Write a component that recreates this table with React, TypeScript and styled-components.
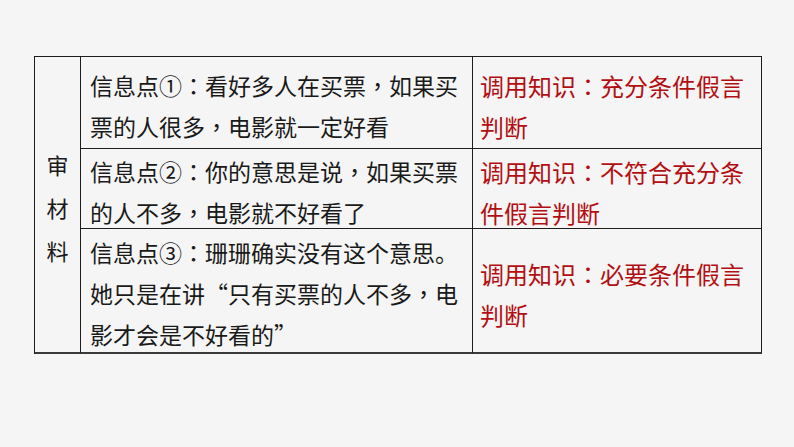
import * as React from 'react';
import styled, { createGlobalStyle } from 'styled-components';

const GlobalStyle = createGlobalStyle`
  html, body {
    margin: 0;
    padding: 0;
    background: #f5f5f5;
  }
  body {
    font-family: 'Noto Sans CJK SC', 'Noto Sans', sans-serif;
  }
`;

const Page = styled.main`
  width: 794px;
  height: 447px;
  box-sizing: border-box;
  padding: 56px 0 0 34px;
  background: #f5f5f5;
`;

const Table = styled.div`
  display: grid;
  grid-template-columns: 46px 392px 289px;
  grid-template-rows: 92px 80px 125px;
  border-top: 1px solid #1c1c1c;
  border-left: 1px solid #1c1c1c;
  width: max-content;
`;

const Cell = styled.div<{ $last?: boolean }>`
  box-sizing: border-box;
  border-right: 1px solid #1c1c1c;
  border-bottom: ${({ $last }) => ($last ? '2px solid #3a3a3a' : '1px solid #1c1c1c')};
  display: flex;
  align-items: center;
`;

const HeadCell = styled(Cell)`
  grid-row: 1 / 4;
  grid-column: 1;
  flex-direction: column;
  justify-content: center;
  padding-top: 6px;
  font-size: 22px;
  line-height: 43px;
  color: #1a1a1a;
`;

const InfoCell = styled(Cell)`
  padding: 6px 0 0 9px;
  font-size: 23px;
  line-height: 41px;
  color: #1a1a1a;
  white-space: nowrap;
`;

const KnowCell = styled(Cell)`
  padding: 6px 0 0 7px;
  font-size: 24px;
  line-height: 41px;
  color: #b30f12;
  white-space: nowrap;
`;

// centred full-width colon / comma, as in the slide
const Punct = styled.span`
  font-family: 'Noto Sans CJK TC', 'Noto Sans CJK SC', sans-serif;
`;

const rows = [
  {
    info: ['信息点①：看好多人在买票，如果买', '票的人很多，电影就一定好看'],
    know: ['调用知识：充分条件假言', '判断'],
  },
  {
    info: ['信息点②：你的意思是说，如果买票', '的人不多，电影就不好看了'],
    know: ['调用知识：不符合充分条', '件假言判断'],
  },
  {
    info: [
      '信息点③：珊珊确实没有这个意思。',
      '她只是在讲“只有买票的人不多，电',
      '影才会是不好看的”',
    ],
    know: ['调用知识：必要条件假言', '判断'],
  },
];

function Line({ text }: { text: string }) {
  const parts = text.split(/([：，])/);
  return (
    <div>
      {parts.map((part, idx) =>
        part === '：' || part === '，' ? <Punct key={idx}>{part}</Punct> : part,
      )}
    </div>
  );
}

function Lines({ lines }: { lines: string[] }) {
  return (
    <div>
      {lines.map((line) => (
        <Line key={line} text={line} />
      ))}
    </div>
  );
}

function App() {
  return (
    <Page>
      <GlobalStyle />
      <Table>
        <HeadCell $last>
          <span>审</span>
          <span>材</span>
          <span>料</span>
        </HeadCell>
        {rows.map((row, idx) => (
          <React.Fragment key={idx}>
            <InfoCell $last={idx === rows.length - 1}>
              <Lines lines={row.info} />
            </InfoCell>
            <KnowCell $last={idx === rows.length - 1}>
              <Lines lines={row.know} />
            </KnowCell>
          </React.Fragment>
        ))}
      </Table>
    </Page>
  );
}

export default App;
